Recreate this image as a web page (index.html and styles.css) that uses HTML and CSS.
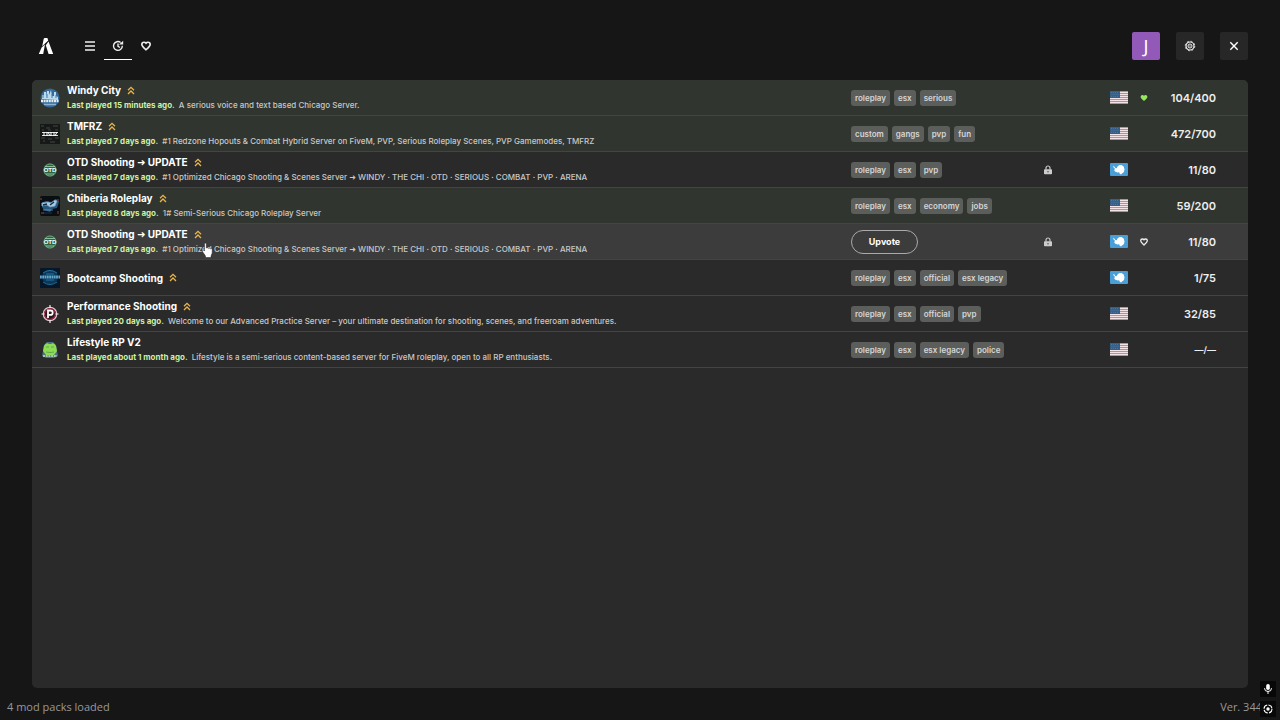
FILE: index.html
```html
<!DOCTYPE html>
<html lang="en">
<head>
<meta charset="utf-8">
<title>Server history</title>
<link rel="stylesheet" href="styles.css">
</head>
<body>
<svg class="sprite" aria-hidden="true">
  <symbol id="boost" viewBox="0 0 8 9"><path d="M1 4.300 4 1.300l3 3M1 8l3-3 3 3" fill="none" stroke="currentColor" stroke-width="1.300"/></symbol>
  <symbol id="lock" viewBox="0 0 10 10"><path d="M3 4.500V3a2 2 0 0 1 4 0v1.500" fill="none" stroke="currentColor" stroke-width="1.200"/><path d="M1.800 4.200h6.400q.8 0 .8.8v3.400q0 .8-.8.8H1.800q-.8 0-.8-.8V5q0-.8.8-.8z" fill="currentColor"/><circle cx="5" cy="6.700" r=".8" fill="#555"/></symbol>
  <symbol id="heart" viewBox="0 0 24 24"><path d="M12 21 10.500 19.700C5 14.700 2 12 2 8.300 2 5.200 4.400 3 7.300 3 9.100 3 10.900 3.900 12 5.300 13.100 3.900 14.900 3 16.700 3 19.600 3 22 5.200 22 8.300c0 3.700-3 6.400-8.500 11.400z"/></symbol>
  <symbol id="us" viewBox="0 0 18 13"><rect width="18" height="13" rx="1" fill="#f3e3e6"/><path d="M0 .5h18M0 2.500h18M0 4.500h18M0 6.500h18M0 8.500h18M0 10.500h18M0 12.500h18" stroke="#df7f8c" stroke-width="1"/><path d="M0 0h10v7H0z" fill="#355f87"/><path d="M1 1.500h8M1.500 3.500h7M1 5.500h8" stroke="#5580a3" stroke-width=".7" stroke-dasharray="1 1"/></symbol>
  <symbol id="aq" viewBox="0 0 18 13"><rect width="18" height="13" rx="1" fill="#4a9fd8"/><path d="M3 2.800 4.300 3.500l1 1.600 1.300.1L7.500 3.500l1.500-1.200 2.500-.3 2.200 1.600.8 2.700-.5 2.700-2 1.500-1 1-1.300-.8-.5-1.400-1.700.3-2.500-1-.9-1.500 1.100-1.100-1.400-1.200z" fill="#fff"/></symbol>
</svg>

<header class="topbar">
  <a class="logo" href="#" aria-label="Home"><svg width="16" height="18" viewBox="0 0 16 18" fill="#fff"><path d="M5.600 2.200Q5.900 1 6.800 1h2.600L10.200 3.600 4.200 9.200zM10.500 4.500 15.200 17h-4.600L7.800 8.300zM.8 17 3.600 10.600 7 7.500 5.200 17z"/></svg></a>
  <nav class="tabs">
    <button class="tab" aria-label="All servers"><svg width="10" height="10" viewBox="0 0 10 10"><path d="M0 1h10M0 5h10M0 9h10" stroke="#eee" stroke-width="1.300"/></svg></button>
    <button class="tab tab-active" aria-label="History"><svg width="12" height="12" viewBox="0 0 12 12" fill="none" stroke="#eee" stroke-width="1.400"><path d="M10.300 5.800A4.400 4.400 0 1 1 8.600 2.500M6 3.500v2.800l2 1.200"/><path d="M7 4.500h4.200V.7z" fill="#eee" stroke="none"/></svg></button>
    <button class="tab" aria-label="Favorites"><svg class="outline" width="10" height="10"><use href="#heart"/></svg></button>
  </nav>
  <div class="actions">
    <button class="square avatar" aria-label="Account">J</button>
    <button class="square" aria-label="Settings"><svg width="12" height="12" viewBox="0 0 12 12" fill="none" stroke="#eee"><circle cx="6" cy="6" r="4" stroke-width="1.200"/><circle cx="6" cy="6" r="4.800" stroke-width=".8" stroke-dasharray="1.900 1.870"/><circle cx="6" cy="6" r="2" stroke-width="1"/><circle cx="6" cy="6" r=".7" fill="#eee" stroke="none"/></svg></button>
    <button class="square" aria-label="Close"><svg width="10" height="10" viewBox="0 0 10 10"><path d="m1.300 1.300 7.400 7.400m0-7.400-7.400 7.400" stroke="#fff" stroke-width="1.400"/></svg></button>
  </div>
</header>

<main class="panel">
<ul class="servers">
  <li class="server premium">
    <svg class="thumb" viewBox="0 0 20 20"><circle cx="10" cy="10" r="9.500" fill="#34699b"/><path d="M2 11V7h2V4h2v5l1-6h2v4l2-5 1 6h2V4h2v4l2 1v3z" fill="#b9dbed"/><path d="M3 7v3m4-4v4m5-4v4m4-3v3" stroke="#4679a2"/><path d="M1 13h18" stroke="#e4edf3" stroke-width="2.500" stroke-dasharray="2 .6"/><path d="M4 16.500h12" stroke="#8cb4d1" stroke-width="1.500"/></svg>
    <div class="info"><h2>Windy City <svg class="boost"><use href="#boost"/></svg></h2><p><b>Last played 15 minutes ago.</b> A serious voice and text based Chicago Server.</p></div>
    <div class="tags"><span>roleplay</span><span>esx</span><span>serious</span></div>
    <div class="lock"></div><svg class="flag"><use href="#us"/></svg>
    <button class="fav fav-on" aria-label="Remove favorite"><svg><use href="#heart"/></svg></button><div class="count">104/400</div>
  </li>
  <li class="server premium">
    <svg class="thumb" viewBox="0 0 20 20"><rect width="20" height="20" fill="#171919"/><path d="M1 2h3m2 2h4m3-2h5M2 6h2m4 0h3m4 0h3M1 14h4m3 1h4m3-1h4M3 17h2m5 1h5" stroke="#4b504e" stroke-width=".8"/><path d="M2 8.500h16M2 11.500h16" stroke="#ddd" stroke-width="1"/><path d="M4 8v4m3-4v4m1-4 2 4m1-4v4m3-4v4m3-4-2 4" stroke="#fff" stroke-width="1"/></svg>
    <div class="info"><h2>TMFRZ <svg class="boost"><use href="#boost"/></svg></h2><p><b>Last played 7 days ago.</b> #1 Redzone Hopouts &amp; Combat Hybrid Server on FiveM, PVP, Serious Roleplay Scenes, PVP Gamemodes, TMFRZ</p></div>
    <div class="tags"><span>custom</span><span>gangs</span><span>pvp</span><span>fun</span></div>
    <div class="lock"></div><svg class="flag"><use href="#us"/></svg><div class="fav"></div><div class="count">472/700</div>
  </li>
  <li class="server">
    <svg class="thumb" viewBox="0 0 20 20"><circle cx="10" cy="10" r="6.800" fill="#2d6444"/><circle cx="10" cy="10" r="6" fill="none" stroke="#7bb58c" stroke-width=".8"/><path d="M5 6.500h10M6 14h8" stroke="#a6d3b1" stroke-width=".8"/><text x="10" y="12" text-anchor="middle" class="art-text">OTD</text></svg>
    <div class="info"><h2>OTD Shooting ➜ UPDATE <svg class="boost"><use href="#boost"/></svg></h2><p><b>Last played 7 days ago.</b> #1 Optimized Chicago Shooting &amp; Scenes Server ➜ WINDY · THE CHI · OTD · SERIOUS · COMBAT · PVP · ARENA</p></div>
    <div class="tags"><span>roleplay</span><span>esx</span><span>pvp</span></div>
    <div class="lock"><svg><use href="#lock"/></svg></div><svg class="flag"><use href="#aq"/></svg><div class="fav"></div><div class="count">11/80</div>
  </li>
  <li class="server premium">
    <svg class="thumb" viewBox="0 0 20 20"><rect width="20" height="20" rx="2" fill="#090e13"/><path d="m1 7 5-2 5 1 5-3 3 3-2 6-5 1-2 3-6-2-2-3z" fill="#24577f"/><path d="m2 7 6-1 3 1 4-3 2 1-2 5-5 1-3-2-5 1zM3 14h10" fill="#a9cbe1" stroke="#75a4c4" stroke-width=".7"/><path d="m3 9 4-1m3 1 4-3M3 17h9" stroke="#132839" stroke-width="1.300"/><path d="M1 2v2m17-1v3m0 9v3M1 17h3" stroke="#a43a44"/></svg>
    <div class="info"><h2>Chiberia Roleplay <svg class="boost"><use href="#boost"/></svg></h2><p><b>Last played 8 days ago.</b> 1# Semi-Serious Chicago Roleplay Server</p></div>
    <div class="tags"><span>roleplay</span><span>esx</span><span>economy</span><span>jobs</span></div>
    <div class="lock"></div><svg class="flag"><use href="#us"/></svg><div class="fav"></div><div class="count">59/200</div>
  </li>
  <li class="server hovered">
    <svg class="thumb" viewBox="0 0 20 20"><circle cx="10" cy="10" r="6.800" fill="#2d6444"/><circle cx="10" cy="10" r="6" fill="none" stroke="#7bb58c" stroke-width=".8"/><path d="M5 6.500h10M6 14h8" stroke="#a6d3b1" stroke-width=".8"/><text x="10" y="12" text-anchor="middle" class="art-text">OTD</text></svg>
    <div class="info"><h2>OTD Shooting ➜ UPDATE <svg class="boost"><use href="#boost"/></svg></h2><p><b>Last played 7 days ago.</b> #1 Optimized Chicago Shooting &amp; Scenes Server ➜ WINDY · THE CHI · OTD · SERIOUS · COMBAT · PVP · ARENA</p>
      <svg class="pointer" viewBox="0 0 12 16"><path d="M2.500 9V2q0-1 .9-1T4.300 2v4l1-.3 1 .6 1-.3 1 .7 1-.1.9 1v3.500L9 14v1.500H3.500V14L.6 9.700q-.5-.9.300-1.400.7-.4 1.400.2z" fill="#fff" stroke="#222" stroke-width=".5"/></svg></div>
    <div class="tags"><button class="upvote">Upvote</button></div>
    <div class="lock"><svg><use href="#lock"/></svg></div><svg class="flag"><use href="#aq"/></svg>
    <button class="fav" aria-label="Add favorite"><svg class="outline"><use href="#heart"/></svg></button><div class="count">11/80</div>
  </li>
  <li class="server">
    <svg class="thumb" viewBox="0 0 20 20"><rect width="20" height="20" fill="#06172a"/><ellipse cx="10" cy="9" rx="8" ry="7" fill="#0c395a"/><path d="M0 9h20" stroke="#62a7ca" stroke-width="3" stroke-dasharray="1.800 .5"/><path d="M3 5q7-5 14 0M3 14q7 5 14 0M6 6h8m-8 6h8" fill="none" stroke="#287ba8" stroke-width=".9"/></svg>
    <div class="info"><h2>Bootcamp Shooting <svg class="boost"><use href="#boost"/></svg></h2></div>
    <div class="tags"><span>roleplay</span><span>esx</span><span>official</span><span>esx legacy</span></div>
    <div class="lock"></div><svg class="flag"><use href="#aq"/></svg><div class="fav"></div><div class="count">1/75</div>
  </li>
  <li class="server">
    <svg class="thumb" viewBox="0 0 20 20"><circle cx="10" cy="10" r="6.700" fill="#2a1a20" stroke="#e0c8ce" stroke-width="1.300"/><circle cx="10" cy="10" r="5.500" fill="none" stroke="#a82e4e" stroke-width="1.200"/><path d="M10 1v3m0 12v3M1.500 10h3m11 0h3" stroke="#eee" stroke-width="1.200"/><path d="M8 14V6.500h2.500a2.200 2.200 0 0 1 0 4.400H8" fill="none" stroke="#fff" stroke-width="1.800"/></svg>
    <div class="info"><h2>Performance Shooting <svg class="boost"><use href="#boost"/></svg></h2><p><b>Last played 20 days ago.</b> Welcome to our Advanced Practice Server – your ultimate destination for shooting, scenes, and freeroam adventures.</p></div>
    <div class="tags"><span>roleplay</span><span>esx</span><span>official</span><span>pvp</span></div>
    <div class="lock"></div><svg class="flag"><use href="#us"/></svg><div class="fav"></div><div class="count">32/85</div>
  </li>
  <li class="server">
    <svg class="thumb" viewBox="0 0 20 20"><path d="M4 5 7 2h6l3 3 1 6 1 5-4 2H6l-4-2 1-5z" fill="#4c7187"/><path d="M4 6q2-4 5-2h2q3-2 5 2l1 5-3 4H6l-3-4z" fill="#8edb55"/><path d="M6 7h3m2 0h3M6 12q4 1 8 0" stroke="#63a848" fill="none"/><path d="M3 16h14" stroke="#a6c9b0" stroke-width="1.800" stroke-dasharray="2 .7"/></svg>
    <div class="info"><h2>Lifestyle RP V2</h2><p><b>Last played about 1 month ago.</b> Lifestyle is a semi-serious content-based server for FiveM roleplay, open to all RP enthusiasts.</p></div>
    <div class="tags"><span>roleplay</span><span>esx</span><span>esx legacy</span><span>police</span></div>
    <div class="lock"></div><svg class="flag"><use href="#us"/></svg><div class="fav"></div><div class="count count-none">—/—</div>
  </li>
</ul>
</main>

<footer class="status">
  <span>4 mod packs loaded</span><span>Ver. 344</span>
  <div class="voice">
    <span><svg width="10" height="12" viewBox="0 0 10 12"><rect x="3.200" y="1" width="3.600" height="6" rx="1.800" fill="#fff"/><path d="M1.500 5.200a3.500 3.300 0 0 0 7 0M5 8.500V11" stroke="#fff" fill="none"/></svg></span>
    <span><svg width="10" height="10" viewBox="0 0 10 10"><circle cx="5" cy="5" r="4" stroke="#fff" fill="none" stroke-width="1.100" stroke-dasharray="5 1.280"/><circle cx="5" cy="5" r="1.700" fill="#fff"/></svg></span>
  </div>
</footer>
</body>
</html>
```
FILE: styles.css
```css
* { box-sizing: border-box; }
body {
  margin: 0;
  min-height: 100vh;
  display: flex;
  flex-direction: column;
  background: #161616;
  color: #fff;
  font-family: Inter, "Liberation Sans", "DejaVu Sans", sans-serif;
}
button { padding: 0; border: 0; background: none; color: inherit; font: inherit; }
svg { display: block; }
.sprite { position: absolute; width: 0; height: 0; }
.art-text { font: bold 6px "Liberation Sans", sans-serif; fill: #fff; }
.outline { fill: none; stroke: #eee; stroke-width: 4; overflow: visible; }

.topbar { display: flex; padding: 32px 32px 20px; }
.logo { display: grid; place-items: center; width: 28px; height: 28px; margin-right: 16px; }
.tabs { display: flex; }
.tab { display: grid; place-items: center; width: 28px; height: 28px; border-bottom: 1px solid transparent; border-top: 1px solid transparent; }
.tab-active { border-bottom-color: #fff; }
.actions { display: flex; gap: 16px; margin-left: auto; }
.square { display: grid; place-items: center; width: 28px; height: 28px; border-radius: 2px; background: #272727; }
.avatar { background: #9259b9; font: 18px "Noto Sans", sans-serif; }

.panel { flex: 1; margin: 0 32px; border-radius: 5px; overflow: hidden; background: #2a2a2a; }
.servers { margin: 0; padding: 0; list-style: none; }
.server {
  display: grid;
  grid-template-columns: 20px minmax(0, 1fr) 181px 32px 64px 32px 56px;
  align-items: center;
  height: 36px;
  padding: 0 32px 0 8px;
  border-bottom: 1px solid #444;
}
.premium { background: #30352f; }
.hovered { background: #3c3c3c; }
.thumb { width: 20px; height: 20px; }
.info { position: relative; padding-left: 7px; white-space: nowrap; }
.info h2 { display: flex; align-items: center; gap: 6px; margin: 0; font-size: 10px; line-height: 16px; font-weight: 700; }
.boost { width: 8px; height: 9px; color: #eab648; }
.info p { margin: 0; color: #c8c8c8; font-size: 8px; line-height: 15px; font-weight: 500; }
.info b { margin-right: 2px; color: #cdf0a4; font-weight: 700; }
.pointer { position: absolute; left: 142px; top: 16px; width: 12px; height: 16px; }
.tags { display: flex; gap: 4px; }
.tags span { padding: 0 4px; border-radius: 3px; background: #5c5e5c; color: #d6d6d6; font-size: 8px; line-height: 16px; font-weight: 600; }
.upvote { width: 67px; height: 24px; border: 1px solid #aaa; border-radius: 12px; font-size: 9px; font-weight: 700; }
.lock { display: grid; place-items: center; color: #ccc; }
.lock svg { width: 10px; height: 10px; }
.flag { justify-self: end; width: 18px; height: 13px; }
.fav { display: grid; place-items: center; }
.fav svg { width: 8px; height: 8px; }
.fav-on { color: #96e85a; fill: currentColor; }
.count { text-align: right; color: #eee; font-size: 11px; font-weight: 600; }
.count-none { font-size: 9px; }

.status { position: relative; display: flex; justify-content: space-between; height: 32px; padding: 10px 18px 0 7px; color: #999; font: 11px/18px "Open Sans", "Noto Sans", sans-serif; }
.voice { position: absolute; right: 4px; top: -7px; display: grid; gap: 4px; }
.voice span { display: grid; place-items: center; width: 16px; height: 16px; background: #080808; }
```
